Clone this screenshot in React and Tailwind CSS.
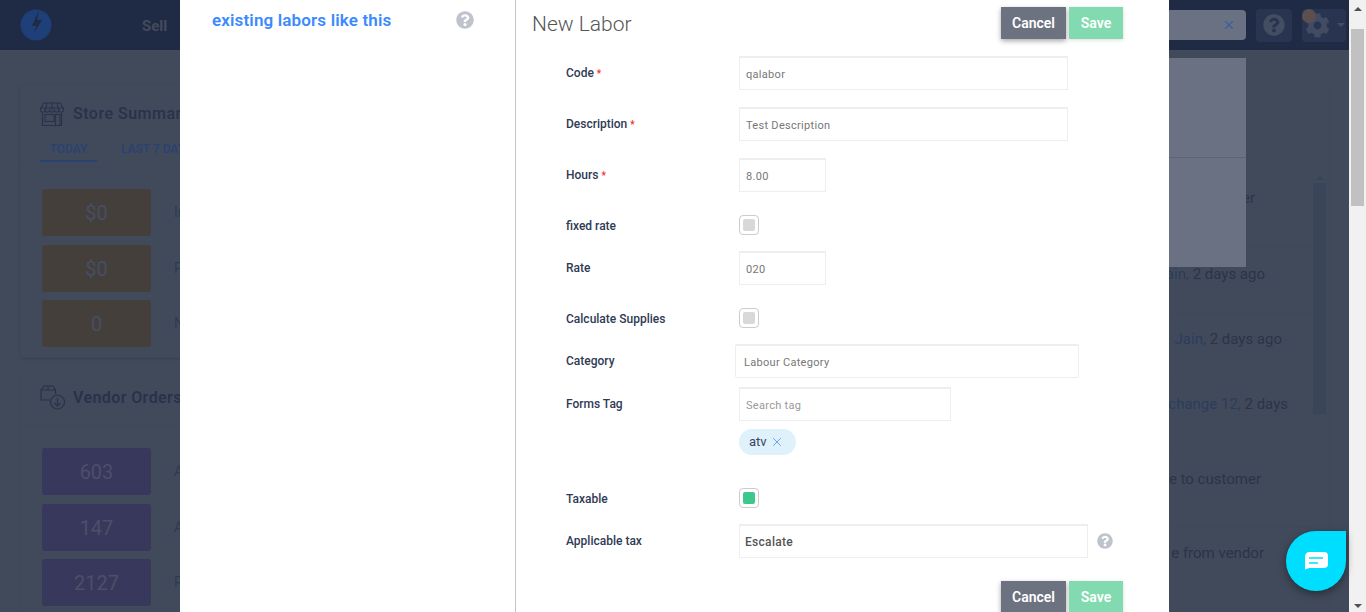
import React from 'react';
import { FaCog, FaQuestionCircle } from 'react-icons/fa';
import { X } from 'lucide-react';

const font = { fontFamily: '"Roboto", "Liberation Sans", sans-serif' };

const StoreIcon = () => (
  <svg width="24" height="24" viewBox="0 0 24 24" fill="none" stroke="#28324b" strokeWidth="1.1">
    <path d="M3.5 1h17l3 6v1.5a2.4 2.4 0 0 1-4.6 0 2.4 2.4 0 0 1-4.6 0 2.4 2.4 0 0 1-4.6 0 2.4 2.4 0 0 1-4.6 0 2.4 2.4 0 0 1-4.6 0V7z" />
    <path d="M.5 6h23M7 1 5.5 8.5M12 1v7.5M17 1l1.5 7.5M2.5 11v12.5h19V11" />
    <rect x="5" y="12.5" width="9" height="7" />
    <rect x="15.5" y="12.5" width="4.5" height="11" />
  </svg>
);

const VendorIcon = () => (
  <svg width="25" height="25" viewBox="0 0 25 25" fill="none" stroke="#28324b" strokeWidth="1.2">
    <path d="M11 15H1V5l3-4h9l2.5 4v4M1 5h14M8 1v4" />
    <circle cx="17.5" cy="17" r="7" />
    <path d="M17.5 13v8M14.5 18l3 3 3-3" />
  </svg>
);

const Stat = ({ value, label, box, text, className = '' }) => (
  <div className={`flex items-center ${className}`}>
    <div className={`w-[109px] h-[47px] rounded-[3px] flex items-center justify-center text-[20px] ${box} ${text}`}>{value}</div>
    <span className="ml-[23px] text-[14px] text-[#2d3a55] whitespace-nowrap">{label}</span>
  </div>
);

const activity = [
  { h: 'h-[81px]', pt: 'pt-[20px]', pr: 'pr-[57px]', text: <>Estimate sent to customer</> },
  { h: 'h-[65px]', pt: 'pt-[15px]', pr: 'pr-[47px]', text: <><span className="text-[#2b3d5c]">Jain,</span> 2 days ago</> },
  { h: 'h-[65px]', pt: 'pt-[15px]', pr: 'pr-[30px]', text: <><span className="text-[#2b3d5c]">Jain,</span> 2 days ago</> },
  { h: 'h-[75px]', pt: 'pt-[15px]', pr: 'pr-[24px]', text: <><span className="text-[#2b3d5c]">change 12,</span> 2 days</> },
  { h: 'h-[75px]', pt: 'pt-[15px]', pr: 'pr-[51px]', text: <>e to customer</> },
  { h: 'h-[75px]', pt: 'pt-[14px]', pr: 'pr-[48px]', text: <>e from vendor</> },
];

function Dashboard() {
  return (
    <div className="h-full bg-[#414a5b] overflow-hidden">
      <header className="h-[50px] bg-[#1f2a44] flex items-center pl-[20px] pr-[3px]">
        <svg width="32" height="32" viewBox="0 0 32 32">
          <circle cx="16" cy="16" r="15.5" fill="#1f3f78" />
          <path d="M19 1 12 17h4.5L13 25l9-14h-5z" fill="#1f2a44" />
        </svg>
        <span className="ml-[90px] mt-[3px] text-[15px] font-bold text-[#434b5b]">Sell</span>
        <div className="ml-auto w-[200px] h-[30px] bg-[#697182] rounded-[4px] flex items-center justify-end pr-[10px] text-[#3d5f9c]">
          <X size={14} strokeWidth={2} />
        </div>
        <div className="ml-[10px] w-[36px] h-[33px] bg-[#293550] rounded-[4px] flex items-center justify-center">
          <FaQuestionCircle size={22} color="#434e63" />
        </div>
        <div className="relative ml-[10px] w-[44px] h-[33px] bg-[#293550] rounded-[4px] flex items-center pl-[3px]">
          <FaCog size={25} color="#414b61" />
          <span className="absolute left-0 top-0 w-[14px] h-[14px] rounded-full bg-[#5b4f4f]" />
          <span className="ml-[7px] border-x-[4px] border-x-transparent border-t-[4px] border-t-[#434e63]" />
        </div>
      </header>

      <div className="flex pl-[20px] pr-[19px] pt-[35px] gap-[20px]">
        <div className="w-[540px] shrink-0 flex flex-col gap-[14px]">
          <section className="h-[273px] border border-[#3f4859] rounded-[3px] shadow-sm">
            <div className="h-[81px] border-b border-[#3f4859] pl-[19px]">
              <div className="flex items-center gap-[9px] pt-[16px]">
                <StoreIcon />
                <span className="text-[16px] font-medium tracking-[0.5px] text-[#28324b]">Store Summary</span>
              </div>
              <div className="flex gap-[24px] mt-[14px] text-[12px] font-medium text-[#2a4173]">
                <span className="w-[57px] h-[22px] text-center border-b-2 border-[#2a4173]">TODAY</span>
                <span>LAST 7 DAYS</span>
              </div>
            </div>
            <div className="pl-[21px] pt-[22px] flex flex-col gap-[9px]">
              <Stat value="$0" label="Invoices" box="bg-[#443f3b]" text="text-[#454f63]" />
              <Stat value="$0" label="Payments" box="bg-[#443f3b]" text="text-[#454f63]" />
              <Stat value="0" label="New" box="bg-[#443f3b]" text="text-[#454f63]" className="-mt-px" />
            </div>
          </section>
          <section className="h-[260px] border border-[#3f4859] rounded-[3px]">
            <div className="h-[52px] border-b border-[#3f4859] pl-[19px] pb-[2px] flex items-center gap-[8px]">
              <VendorIcon />
              <span className="text-[16px] font-semibold tracking-[0.4px] text-[#28324b]">Vendor Orders</span>
            </div>
            <div className="pl-[21px] pt-[23px] flex flex-col gap-[9px]">
              <Stat value="603" label="All" box="bg-[#38385c]" text="text-[#4a5068]" />
              <Stat value="147" label="Awaiting" box="bg-[#38385c]" text="text-[#4a5068]" />
              <Stat value="2127" label="Received" box="bg-[#38385c]" text="text-[#4a5068]" className="-mt-px" />
            </div>
          </section>
        </div>

        <section className="flex-1 flex border border-[#3f4859] rounded-[3px] pt-[80px] h-[600px]">
          <div className="flex-1 min-w-0 border-t border-[#3f4859]">
            {activity.map((row, i) => (
              <div key={i} className={`${row.h} ${row.pt} ${row.pr} flex justify-end border-b border-[#3f4859] text-[15px] text-[#2b3448] whitespace-nowrap`}>
                <span>{row.text}</span>
              </div>
            ))}
          </div>
          <div className="w-[15px] mr-[2px] flex flex-col items-center pt-[10px]">
            <span className="border-x-[4px] border-x-transparent border-b-[4px] border-b-[#39435a]" />
            <div className="w-[13px] h-[231px] bg-[#3b4559] mt-[3px]" />
          </div>
        </section>
      </div>
    </div>
  );
}

const Field = ({ label, required, check, children, className = '' }) => (
  <div className={`flex items-center ${className}`}>
    <label className={`w-[173px] shrink-0 text-[12px] font-medium text-[#2f3a55] whitespace-nowrap ${check ? 'pt-[2px]' : ''}`}>
      {label}
      {required && <span className="text-[#f02b2b] ml-[3px] text-[10px]">*</span>}
    </label>
    {children}
  </div>
);

const TextBox = ({ value, placeholder, className = '' }) => (
  <input
    readOnly
    defaultValue={value}
    placeholder={placeholder}
    className={`h-[34px] px-[6px] pt-[2px] bg-white border border-[#eeeeee] border-t-2 text-[11px] text-[#777] tracking-[0.3px] outline-none placeholder:text-[#999] ${className}`}
  />
);

const Check = ({ on }) => (
  <span className="w-[20px] h-[20px] rounded-[4px] border border-[#cccccc] flex items-center justify-center">
    <span className={`w-[12px] h-[12px] rounded-[2px] ${on ? 'bg-[#3cc88d]' : 'bg-[#d8d8d8]'}`} />
  </span>
);

const Buttons = () => (
  <div className="flex gap-[3px]">
    <button className="w-[65px] h-[32px] bg-[#6c7280] text-white text-[14px] font-semibold shadow-[0_2px_5px_rgba(0,0,0,0.35)]">Cancel</button>
    <button className="w-[54px] h-[32px] bg-[#82dab0] text-white text-[14px] font-semibold shadow-[0_1px_4px_rgba(0,0,0,0.15)]">Save</button>
  </div>
);

function LaborModal() {
  return (
    <div className="absolute left-[180px] top-0 bottom-0 w-[989px] bg-white flex overflow-hidden">
      <aside className="w-[336px] shrink-0 border-r border-[#c4c4c4] pl-[32px] pr-[41px] pt-[10px] flex justify-between items-start">
        <span className="text-[17px] leading-[20px] font-semibold text-[#3b8afe] tracking-[0.15px] whitespace-nowrap">existing labors like this</span>
        <FaQuestionCircle size={18} color="#bfc3cb" className="mt-[1px]" />
      </aside>
      <div className="flex-1 relative pl-[50px]">
        <div className="-ml-[34px] pt-[7px] pr-[46px] h-[56px] flex justify-between items-start">
          <h2 className="text-[21px] leading-[34px] font-light text-[#555]">New Labor</h2>
          <Buttons />
        </div>
        <Field label="Code" required><TextBox value="qalabor" className="w-[329px]" /></Field>
        <Field label="Description" required className="mt-[17px]"><TextBox value="Test Description" className="w-[329px]" /></Field>
        <Field label="Hours" required className="mt-[17px]"><TextBox value="8.00" className="w-[87px]" /></Field>
        <Field label="fixed rate" check className="mt-[23px]"><Check /></Field>
        <Field label="Rate" className="mt-[16px]"><TextBox value="020" className="w-[87px]" /></Field>
        <Field label="Calculate Supplies" check className="mt-[23px]"><Check /></Field>
        <Field label="Category" className="mt-[16px]">
          <TextBox value="Labour Category" className="w-[344px] -ml-[4px] pl-[8px] rounded-[2px]" />
        </Field>
        <Field label="Forms Tag" className="mt-[9px]"><TextBox placeholder="Search tag" className="w-[212px]" /></Field>
        <div className="ml-[173px] mt-[8px] w-[57px] h-[26px] rounded-full bg-[#dff1fb] flex items-center pl-[10px] gap-[3px] text-[13px] text-[#3a465f]">
          atv
          <X size={14} strokeWidth={1.3} color="#3f8cf0" />
        </div>
        <Field label="Taxable" check className="mt-[33px]"><Check on /></Field>
        <Field label="Applicable tax" className="mt-[16px]">
          <TextBox value="Escalate" className="w-[349px] !pt-0 !pl-[5px] !text-[12px] !text-[#555] font-medium" />
          <FaQuestionCircle size={16} color="#bfc3cb" className="ml-[9px]" />
        </Field>
        <div className="mt-[23px] pr-[46px] flex justify-end"><Buttons /></div>
      </div>
    </div>
  );
}

function ScrollBar() {
  return (
    <div className="w-[17px] shrink-0 bg-[#f1f1f1] flex flex-col items-center pt-[7px] pb-[4px]">
      <span className="border-x-[4px] border-x-transparent border-b-[4px] border-b-[#505050]" />
      <div className="w-[13px] h-[177px] bg-[#c1c1c1] mt-[18px]" />
      <span className="mt-auto border-x-[4px] border-x-transparent border-t-[4px] border-t-[#505050]" />
    </div>
  );
}

export default function App() {
  return (
    <div className="h-[612px] flex overflow-hidden" style={font}>
      <div className="relative flex-1 min-w-0">
        <Dashboard />
        {/* dropdown sticking out behind the modal */}
        <div className="absolute left-[1100px] top-[58px] w-[146px] h-[209px] bg-[#697182]">
          <div className="mt-[99px] border-t border-[#5b6374]" />
        </div>
        <LaborModal />
        <div className="absolute left-[1286px] top-[531px] w-[60px] h-[60px] bg-[#00deff] rounded-full rounded-tr-[6px] flex items-center justify-center shadow-[0_3px_8px_rgba(0,0,0,0.4)]">
          <svg width="24" height="18" viewBox="0 0 24 18">
            <path d="M5 0h15a4 4 0 0 1 4 4v8a4 4 0 0 1-4 4H5.5L1 17.5V5a5 5 0 0 1 4-5z" fill="#fff" />
            <path d="M5 6h14M5 11h9" stroke="#00deff" strokeWidth="1.6" />
          </svg>
        </div>
      </div>
      <ScrollBar />
    </div>
  );
}
